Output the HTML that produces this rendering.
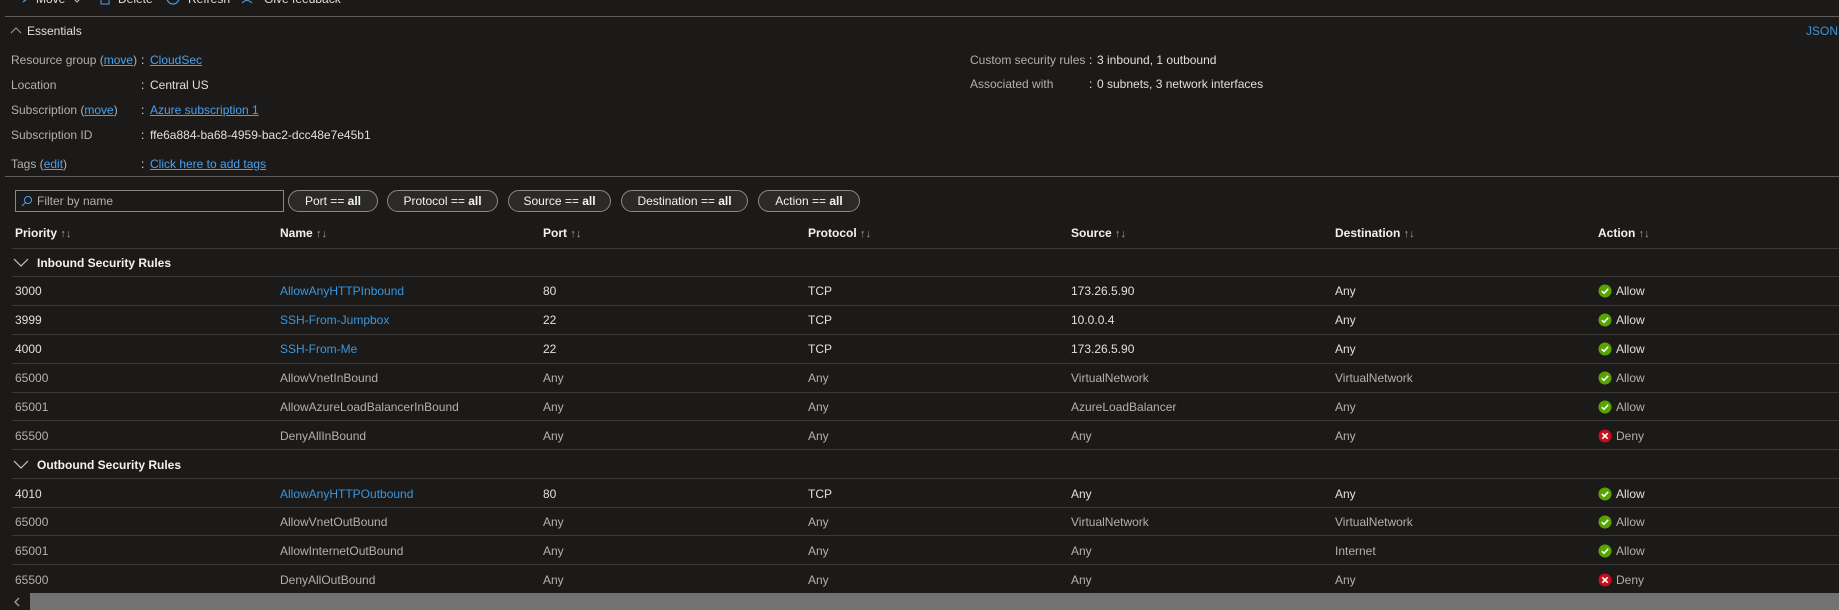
<!DOCTYPE html>
<html><head><meta charset="utf-8"><style>
*{margin:0;padding:0;box-sizing:border-box}
body{width:1839px;height:610px;background:#1b1a19;overflow:hidden;position:relative;font-family:"Liberation Sans",sans-serif;font-size:12px;color:#e1dfdd}
.t{position:absolute;line-height:16px;white-space:nowrap}
.l{color:#b3b0ad}
a,.a{color:#4ba0f0;text-decoration:underline}
.lk{color:#3a96dd}
.hl{position:absolute;left:12px;right:0;height:1px;background:#3b3a39}
.pill{position:absolute;top:190px;height:22px;border:1px solid #8a8886;border-radius:11px;background:#2b2a29;color:#f3f2f1;line-height:20px;text-align:center;font-size:12px}
.h{font-weight:bold;color:#f3f2f1}
.s{color:#a19f9d;font-size:11px;font-weight:normal}
</style></head><body>
<svg style="position:absolute;left:13px;top:-4px" width="16" height="10"><path d="M1 3 H14 M10 0 L14 3 L10 6" stroke="#4ba0f0" fill="none" stroke-width="1.2"/></svg>
<div class="t" style="top:-9px;left:36px">Move</div>
<svg style="position:absolute;left:71px;top:-4px" width="12" height="8"><path d="M1 1 L6 6 L11 1" stroke="#c8c6c4" fill="none"/></svg>
<svg style="position:absolute;left:100px;top:-4px" width="10" height="10"><rect x="1" y="0" width="8" height="8" stroke="#4ba0f0" fill="none"/></svg>
<div class="t" style="top:-9px;left:118px">Delete</div>
<svg style="position:absolute;left:166px;top:-6px" width="14" height="12"><circle cx="7" cy="4" r="6" stroke="#4ba0f0" fill="none" stroke-width="1.2"/></svg>
<div class="t" style="top:-9px;left:188px">Refresh</div>
<svg style="position:absolute;left:241px;top:-6px" width="16" height="12"><circle cx="6" cy="2" r="3.5" stroke="#4ba0f0" fill="none"/><path d="M1 9 Q6 4 11 9 M12 1 L15 -2" stroke="#4ba0f0" fill="none"/></svg>
<div class="t" style="top:-9px;left:264px">Give feedback</div>
<div class="hl" style="top:16px;left:5px;background:#605e5c"></div>
<svg style="position:absolute;left:10px;top:27px" width="12" height="8"><path d="M1 6 L6 1 L11 6" stroke="#a19f9d" fill="none"/></svg>
<div class="t" style="top:23px;left:27px">Essentials</div>
<div class="t lk" style="top:23px;left:1806px">JSON</div>

<div class="t l" style="top:52px;left:11px">Resource group (<a>move</a>)</div>
<div class="t" style="top:52px;left:141px">:</div><div class="t a" style="top:52px;left:150px">CloudSec</div>
<div class="t l" style="top:77px;left:11px">Location</div>
<div class="t" style="top:77px;left:141px">:</div><div class="t" style="top:77px;left:150px">Central US</div>
<div class="t l" style="top:102px;left:11px">Subscription (<a>move</a>)</div>
<div class="t" style="top:102px;left:141px">:</div><div class="t a" style="top:102px;left:150px">Azure subscription 1</div>
<div class="t l" style="top:127px;left:11px">Subscription ID</div>
<div class="t" style="top:127px;left:141px">:</div><div class="t" style="top:127px;left:150px">ffe6a884-ba68-4959-bac2-dcc48e7e45b1</div>
<div class="t l" style="top:156px;left:11px">Tags (<a>edit</a>)</div>
<div class="t" style="top:156px;left:141px">:</div><div class="t a" style="top:156px;left:150px">Click here to add tags</div>

<div class="t l" style="top:52px;left:970px">Custom security rules</div>
<div class="t" style="top:52px;left:1089px">:</div><div class="t" style="top:52px;left:1097px">3 inbound, 1 outbound</div>
<div class="t l" style="top:76px;left:970px">Associated with</div>
<div class="t" style="top:76px;left:1089px">:</div><div class="t" style="top:76px;left:1097px">0 subnets, 3 network interfaces</div>

<div class="hl" style="top:176px;left:5px;background:#605e5c"></div>

<div style="position:absolute;left:15px;top:190px;width:269px;height:22px;border:1px solid #8a8886;background:#1b1a19"></div>
<svg style="position:absolute;left:21px;top:195px" width="12" height="12"><circle cx="7" cy="5" r="3.5" stroke="#4ba0f0" fill="none"/><path d="M4.5 7.5 L1 11" stroke="#4ba0f0"/></svg>
<div class="t l" style="top:193px;left:37px">Filter by name</div>
<div class="pill" style="left:288px;width:90px">Port == <b>all</b></div>
<div class="pill" style="left:387px;width:111px">Protocol == <b>all</b></div>
<div class="pill" style="left:508px;width:103px">Source == <b>all</b></div>
<div class="pill" style="left:621px;width:127px">Destination == <b>all</b></div>
<div class="pill" style="left:758px;width:102px">Action == <b>all</b></div>

<div class="t h" style="top:225px;left:15px">Priority <span class="s">↑↓</span></div>
<div class="t h" style="top:225px;left:280px">Name <span class="s">↑↓</span></div>
<div class="t h" style="top:225px;left:543px">Port <span class="s">↑↓</span></div>
<div class="t h" style="top:225px;left:808px">Protocol <span class="s">↑↓</span></div>
<div class="t h" style="top:225px;left:1071px">Source <span class="s">↑↓</span></div>
<div class="t h" style="top:225px;left:1335px">Destination <span class="s">↑↓</span></div>
<div class="t h" style="top:225px;left:1598px">Action <span class="s">↑↓</span></div>

<div class="hl" style="top:248px"></div>
<div class="hl" style="top:276px"></div>
<div class="hl" style="top:305px"></div>
<div class="hl" style="top:334px"></div>
<div class="hl" style="top:363px"></div>
<div class="hl" style="top:392px"></div>
<div class="hl" style="top:420px"></div>
<div class="hl" style="top:449px"></div>
<div class="hl" style="top:478px"></div>
<div class="hl" style="top:507px"></div>
<div class="hl" style="top:535px"></div>
<div class="hl" style="top:564px"></div>

<svg style="position:absolute;left:13px;top:258px" width="16" height="10"><path d="M1 1 L8 8 L15 1" stroke="#c8c6c4" fill="none" stroke-width="1.2"/></svg>
<div class="t" style="top:255px;left:37px;font-weight:bold;color:#f3f2f1">Inbound Security Rules</div>
<svg style="position:absolute;left:13px;top:460px" width="16" height="10"><path d="M1 1 L8 8 L15 1" stroke="#c8c6c4" fill="none" stroke-width="1.2"/></svg>
<div class="t" style="top:457px;left:37px;font-weight:bold;color:#f3f2f1">Outbound Security Rules</div>

<div style="position:absolute;left:0;top:593px;width:1839px;height:17px;background:#727272"></div>
<div style="position:absolute;left:0;top:593px;width:30px;height:17px;background:#1b1a19"></div>
<svg style="position:absolute;left:13px;top:597px" width="8" height="10"><path d="M6 1 L2 5 L6 9" stroke="#a19f9d" fill="none" stroke-width="1.3"/></svg>

<div class="t" style="top:283px;left:15px">3000</div><div class="t lk" style="top:283px;left:280px">AllowAnyHTTPInbound</div><div class="t" style="top:283px;left:543px">80</div><div class="t" style="top:283px;left:808px">TCP</div><div class="t" style="top:283px;left:1071px">173.26.5.90</div><div class="t" style="top:283px;left:1335px">Any</div>
<div class="t" style="top:312px;left:15px">3999</div><div class="t lk" style="top:312px;left:280px">SSH-From-Jumpbox</div><div class="t" style="top:312px;left:543px">22</div><div class="t" style="top:312px;left:808px">TCP</div><div class="t" style="top:312px;left:1071px">10.0.0.4</div><div class="t" style="top:312px;left:1335px">Any</div>
<div class="t" style="top:341px;left:15px">4000</div><div class="t lk" style="top:341px;left:280px">SSH-From-Me</div><div class="t" style="top:341px;left:543px">22</div><div class="t" style="top:341px;left:808px">TCP</div><div class="t" style="top:341px;left:1071px">173.26.5.90</div><div class="t" style="top:341px;left:1335px">Any</div>
<div class="t l" style="top:370px;left:15px">65000</div><div class="t l" style="top:370px;left:280px">AllowVnetInBound</div><div class="t l" style="top:370px;left:543px">Any</div><div class="t l" style="top:370px;left:808px">Any</div><div class="t l" style="top:370px;left:1071px">VirtualNetwork</div><div class="t l" style="top:370px;left:1335px">VirtualNetwork</div>
<div class="t l" style="top:399px;left:15px">65001</div><div class="t l" style="top:399px;left:280px">AllowAzureLoadBalancerInBound</div><div class="t l" style="top:399px;left:543px">Any</div><div class="t l" style="top:399px;left:808px">Any</div><div class="t l" style="top:399px;left:1071px">AzureLoadBalancer</div><div class="t l" style="top:399px;left:1335px">Any</div>
<div class="t l" style="top:428px;left:15px">65500</div><div class="t l" style="top:428px;left:280px">DenyAllInBound</div><div class="t l" style="top:428px;left:543px">Any</div><div class="t l" style="top:428px;left:808px">Any</div><div class="t l" style="top:428px;left:1071px">Any</div><div class="t l" style="top:428px;left:1335px">Any</div>
<div class="t" style="top:486px;left:15px">4010</div><div class="t lk" style="top:486px;left:280px">AllowAnyHTTPOutbound</div><div class="t" style="top:486px;left:543px">80</div><div class="t" style="top:486px;left:808px">TCP</div><div class="t" style="top:486px;left:1071px">Any</div><div class="t" style="top:486px;left:1335px">Any</div>
<div class="t l" style="top:514px;left:15px">65000</div><div class="t l" style="top:514px;left:280px">AllowVnetOutBound</div><div class="t l" style="top:514px;left:543px">Any</div><div class="t l" style="top:514px;left:808px">Any</div><div class="t l" style="top:514px;left:1071px">VirtualNetwork</div><div class="t l" style="top:514px;left:1335px">VirtualNetwork</div>
<div class="t l" style="top:543px;left:15px">65001</div><div class="t l" style="top:543px;left:280px">AllowInternetOutBound</div><div class="t l" style="top:543px;left:543px">Any</div><div class="t l" style="top:543px;left:808px">Any</div><div class="t l" style="top:543px;left:1071px">Any</div><div class="t l" style="top:543px;left:1335px">Internet</div>
<div class="t l" style="top:572px;left:15px">65500</div><div class="t l" style="top:572px;left:280px">DenyAllOutBound</div><div class="t l" style="top:572px;left:543px">Any</div><div class="t l" style="top:572px;left:808px">Any</div><div class="t l" style="top:572px;left:1071px">Any</div><div class="t l" style="top:572px;left:1335px">Any</div>

<svg style="position:absolute;left:1598px;top:284px" width="14" height="300">
<g id="ok"><circle cx="7" cy="7" r="6.5" fill="#57a300"/><path d="M3.8 7.2 L6 9.3 L10.2 4.8" stroke="#fff" stroke-width="1.6" fill="none"/></g>
<use href="#ok" y="29"/><use href="#ok" y="58"/><use href="#ok" y="87"/><use href="#ok" y="116"/>
<g transform="translate(0,145)"><circle cx="7" cy="7" r="6.5" fill="#c50f1f"/><path d="M4.3 4.3 L9.7 9.7 M9.7 4.3 L4.3 9.7" stroke="#fff" stroke-width="1.6"/></g>
<use href="#ok" y="203"/><use href="#ok" y="231"/><use href="#ok" y="260"/>
</svg>
<svg style="position:absolute;left:1598px;top:573px" width="14" height="14"><circle cx="7" cy="7" r="6.5" fill="#c50f1f"/><path d="M4.3 4.3 L9.7 9.7 M9.7 4.3 L4.3 9.7" stroke="#fff" stroke-width="1.6"/></svg>
<div class="t" style="top:283px;left:1616px">Allow</div>
<div class="t" style="top:312px;left:1616px">Allow</div>
<div class="t" style="top:341px;left:1616px">Allow</div>
<div class="t l" style="top:370px;left:1616px">Allow</div>
<div class="t l" style="top:399px;left:1616px">Allow</div>
<div class="t l" style="top:428px;left:1616px">Deny</div>
<div class="t" style="top:486px;left:1616px">Allow</div>
<div class="t l" style="top:514px;left:1616px">Allow</div>
<div class="t l" style="top:543px;left:1616px">Allow</div>
<div class="t l" style="top:572px;left:1616px">Deny</div>
</body></html>
